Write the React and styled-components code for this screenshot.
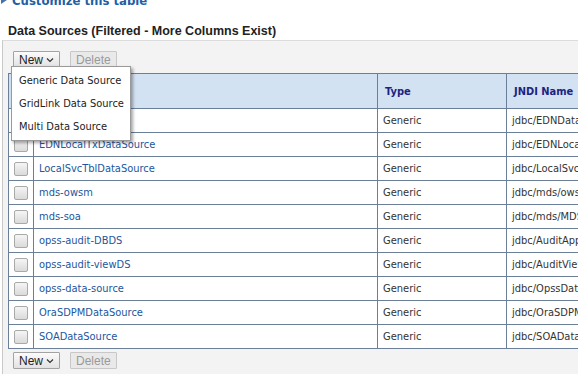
import React from 'react'
import styled, { createGlobalStyle } from 'styled-components';

const GlobalStyle = createGlobalStyle`
    body{
        margin: 0;
        background: #fff;
        overflow: hidden;
        font-family: 'DejaVu Sans Condensed', 'DejaVu Sans', sans-serif;
    }
`;

const Page = styled.div`
    width: 578px;
    height: 374px;
    overflow: hidden;
    position: relative;
`;

const CustomizeLink = styled.a`
    display: flex;
    align-items: center;
    gap: 4px;
    margin-top: -8px;
    height: 16px;
    font-size: 13px;
    font-weight: bold;
    color: #1f5fa6;
    text-decoration: none;
`;

const Title = styled.h2`
    margin: 0;
    padding: 16px 0 0 8px;
    height: 16px;
    font-family: 'Liberation Sans', Arial, sans-serif;
    font-size: 12.5px;
    font-weight: bold;
    color: #222;
`;

const Panel = styled.div`
    margin: 0 0 0 2px;
    border-left: 1px solid #c9c9c9;
    border-top: 1px solid #dcdcdc;
    background: #f3f3f3;
    padding: 10px 0 0 5px;
    height: 400px;
`;

const Toolbar = styled.div`
    display: flex;
    gap: 10px;
    padding-left: 5px;
    height: 17px;
`;

const Button = styled.button`
    height: 17px;
    padding: 0 5px;
    display: flex;
    align-items: center;
    gap: 3px;
    font-family: 'Liberation Sans', Arial, sans-serif;
    font-size: 12px;
    border: 1px solid ${p => p.disabled ? '#c8c8c8' : '#a3a3a3'};
    background: ${p => p.disabled ? '#e9e9e9' : 'linear-gradient(#fbfbfb, #e2e2e2)'};
    color: ${p => p.disabled ? '#9a9a9a' : '#222'};
    border-radius: 1px;
`;

const Table = styled.table`
    margin: 5px 0 3px;
    width: 700px;
    border-collapse: collapse;
    background: #fff;
    font-size: 11px;
    th, td{
        border: 1px solid #6b7f98;
        text-align: left;
        padding: 0 0 0 5px;
    }
    th{
        height: 34px;
        background: #d3e2f3;
        color: #1b2481;
        font-weight: bold;
        font-size: 11px;
        padding-left: 7px;
    }
    td{
        height: 23px;
        color: #333;
    }
`;

const CheckCell = styled.td`
    width: 19px;
`;

const Check = styled.span`
    display: block;
    width: 12px;
    height: 12px;
    border: 1px solid #a9a9a9;
    border-radius: 2px;
    background: linear-gradient(#f5f5f5, #dadada);
`;

const NameLink = styled.a`
    color: #2256a0;
    text-decoration: none;
`;

const Menu = styled.ul`
    position: absolute;
    left: 11px;
    top: 66px;
    width: 118px;
    margin: 0;
    padding: 2px 0;
    list-style: none;
    background: #fff;
    border: 1px solid #9a9a9a;
    box-shadow: 2px 2px 3px rgba(0,0,0,0.35);
    li{
        height: 23px;
        line-height: 23px;
        padding-left: 7px;
        font-size: 11px;
        color: #222;
    }
`;

const rows = [
    ['EDNDataSource', 'jdbc/EDNDataSource'],
    ['EDNLocalTxDataSource', 'jdbc/EDNLocalTxDataSource'],
    ['LocalSvcTblDataSource', 'jdbc/LocalSvcTblDataSource'],
    ['mds-owsm', 'jdbc/mds/owsm'],
    ['mds-soa', 'jdbc/mds/MDS_LocalTxDataSource'],
    ['opss-audit-DBDS', 'jdbc/AuditAppendDataSource'],
    ['opss-audit-viewDS', 'jdbc/AuditViewDataSource'],
    ['opss-data-source', 'jdbc/OpssDataSource'],
    ['OraSDPMDataSource', 'jdbc/OraSDPMDataSource'],
    ['SOADataSource', 'jdbc/SOADataSource'],
];

const Arrow = () => (
    <svg width="8" height="6" viewBox="0 0 8 6">
        <path d="M1 1.5 L4 4.5 L7 1.5" fill="none" stroke="#333" strokeWidth="1.2" />
    </svg>
);

const Actions = () => (
    <Toolbar>
        <Button>New <Arrow /></Button>
        <Button disabled>Delete</Button>
    </Toolbar>
);

const App = () => {
    return(
        <Page>
            <GlobalStyle />
            <CustomizeLink>
                <svg width="8" height="10" viewBox="0 0 8 10">
                    <path d="M1 1 L7 5 L1 9 Z" fill="#4a72a8" />
                </svg>
                Customize this table
            </CustomizeLink>
            <Title>Data Sources (Filtered - More Columns Exist)</Title>
            <Panel>
                <Actions />
                <Table>
                    <colgroup>
                        <col style={{ width: 25 }} />
                        <col style={{ width: 344 }} />
                        <col style={{ width: 129 }} />
                        <col />
                    </colgroup>
                    <thead>
                        <tr>
                            <th></th>
                            <th>Name</th>
                            <th>Type</th>
                            <th>JNDI Name</th>
                        </tr>
                    </thead>
                    <tbody>
                        {rows.map(([name, jndi]) => (
                            <tr key={name}>
                                <CheckCell><Check /></CheckCell>
                                <td><NameLink>{name}</NameLink></td>
                                <td>Generic</td>
                                <td>{jndi}</td>
                            </tr>
                        ))}
                    </tbody>
                </Table>
                <Actions />
            </Panel>
            <Menu>
                <li>Generic Data Source</li>
                <li>GridLink Data Source</li>
                <li>Multi Data Source</li>
            </Menu>
        </Page>
    )
}

export default App;
